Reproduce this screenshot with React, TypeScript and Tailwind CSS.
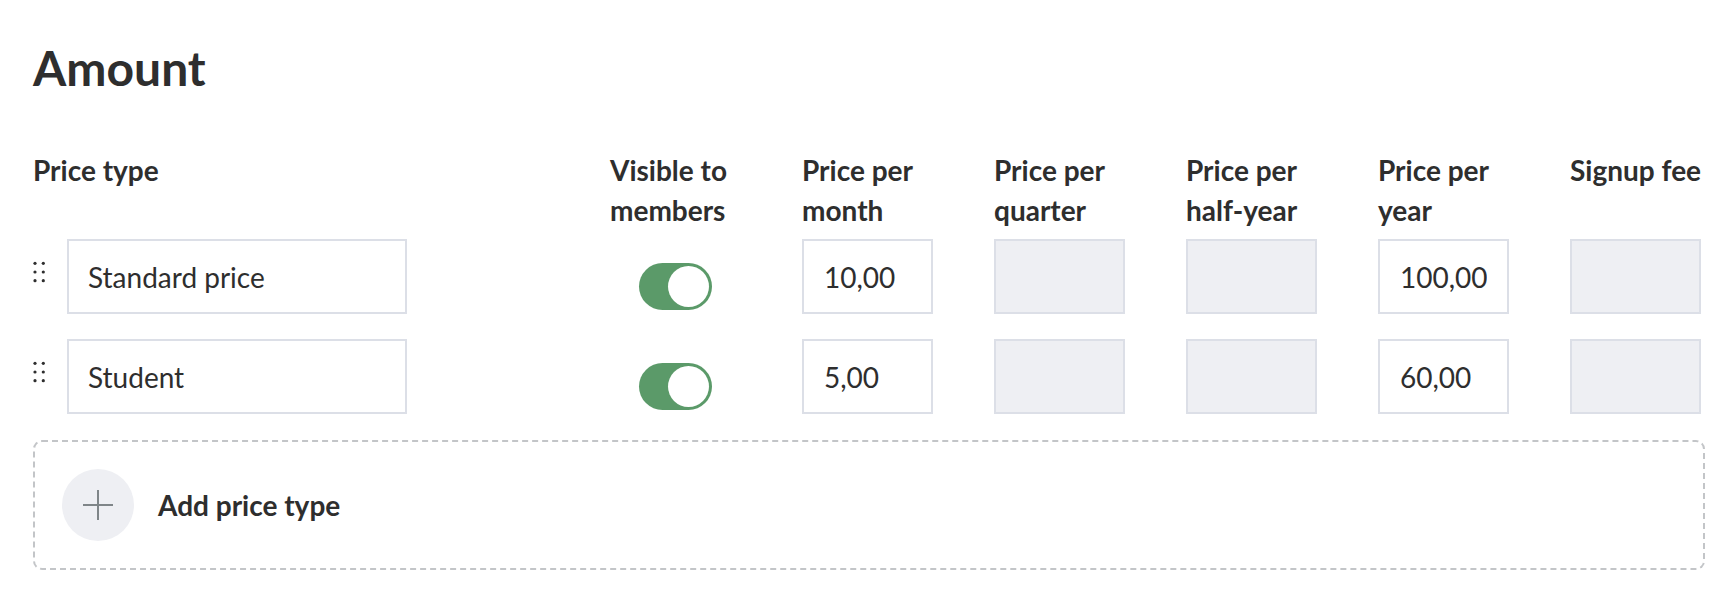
const columns = [
  "Visible to members",
  "Price per month",
  "Price per quarter",
  "Price per half-year",
  "Price per year",
  "Signup fee",
];

const priceTypes = [
  { name: "Standard price", visible: true, month: "10,00", year: "100,00" },
  { name: "Student", visible: true, month: "5,00", year: "60,00" },
];

const gridCols = "grid grid-cols-[1fr_repeat(6,131px)] gap-x-[61px] pr-[4px]";

function DragHandle() {
  return (
    <svg width="13" height="22" viewBox="0 0 13 22" className="mt-[22px] shrink-0 text-[#2e2e2e]">
      {[2.3, 11, 19.7].map((cy) =>
        [2, 10.3].map((cx) => (
          <circle key={`${cx}-${cy}`} cx={cx} cy={cy} r="1.6" fill="currentColor" />
        ))
      )}
    </svg>
  );
}

function Toggle({ on }: { on: boolean }) {
  return (
    <div
      className={
        on
          ? "flex h-[47px] w-[73px] items-center justify-end rounded-full bg-[#5b9a69] p-[3px]"
          : "flex h-[47px] w-[73px] items-center justify-start rounded-full bg-[#c9ccd3] p-[3px]"
      }
    >
      <div className="h-[41px] w-[41px] rounded-full bg-white" />
    </div>
  );
}

function PriceInput({ value }: { value?: string }) {
  if (!value) {
    return <div className="h-[75px] w-full border-2 border-[#dcdfe7] bg-[#eeeff3]" />;
  }
  return (
    <input
      readOnly
      value={value}
      className="h-[75px] w-full border-2 border-[#dcdfe7] bg-white px-[20px] text-[28px] text-[#2e2e2e] outline-none"
    />
  );
}

export default function App() {
  return (
    <div className="min-h-screen bg-white pl-[33px] pr-[27px] pt-[40px] font-['Lato',sans-serif] text-[#2e2e2e]">
      <h1 className="text-[48px] font-bold leading-[56px]">Amount</h1>

      <div className={`${gridCols} mt-[54px] text-[28px] font-bold leading-[40px]`}>
        <div>Price type</div>
        {columns.map((label) => (
          <div key={label} className={label === "Signup fee" ? "whitespace-nowrap" : ""}>
            {label}
          </div>
        ))}
      </div>

      <div className="mt-[9px] flex flex-col gap-[25px]">
        {priceTypes.map((row) => (
          <div key={row.name} className={gridCols}>
            <div className="flex items-start gap-[21px]">
              <DragHandle />
              <input
                readOnly
                value={row.name}
                className="h-[75px] w-[340px] border-2 border-[#dcdfe7] bg-white px-[19px] text-[28px] text-[#2e2e2e] outline-none"
              />
            </div>
            <div className="flex justify-center pt-[24px]">
              <Toggle on={row.visible} />
            </div>
            <PriceInput value={row.month} />
            <PriceInput />
            <PriceInput />
            <PriceInput value={row.year} />
            <PriceInput />
          </div>
        ))}
      </div>

      <button className="mt-[26px] flex w-full items-center gap-[24px] rounded-[9px] border-2 border-dashed border-[#c3c5c8] bg-white py-[27px] pl-[27px] text-left">
        <span className="flex h-[72px] w-[72px] items-center justify-center rounded-full bg-[#eeeff3]">
          <svg width="30" height="30" viewBox="0 0 30 30" fill="none" stroke="#7f8588" strokeWidth="2">
            <path d="M15 0v30M0 15h30" />
          </svg>
        </span>
        <span className="text-[28px] font-bold text-[#2e2e2e]">Add price type</span>
      </button>
    </div>
  );
}
